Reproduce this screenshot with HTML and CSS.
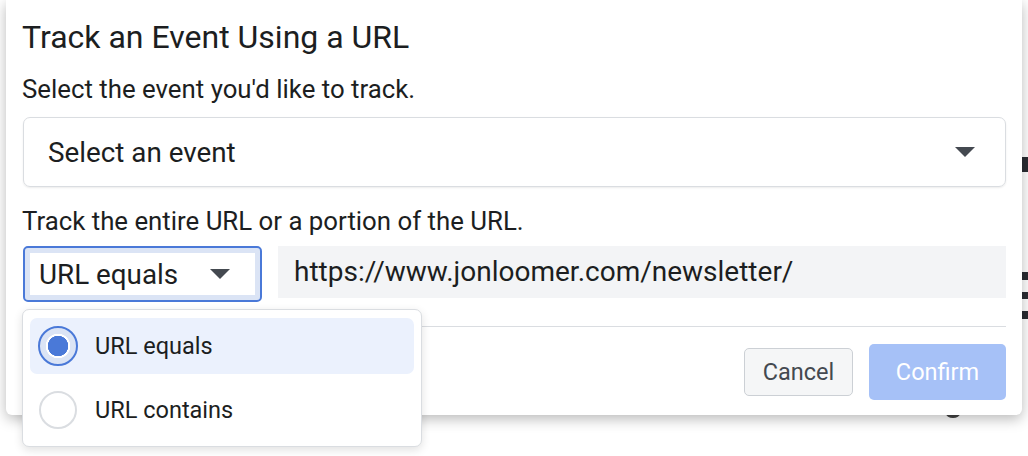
FILE: index.html
```html
<!DOCTYPE html>
<html lang="en">
<head>
    <meta charset="UTF-8">
    <meta name="viewport" content="width=device-width, initial-scale=1.0">
    <link rel="stylesheet" href="styles.css">
    <title>Track an Event Using a URL</title>
</head>
<body>

    <!-- page underneath the dialog, only its right edge shows -->
    <div class="page-behind">
        <span class="behind-bar bar-top"></span>
        <span class="behind-bar bar-1"></span>
        <span class="behind-bar bar-2"></span>
        <span class="behind-bar bar-3"></span>
        <span class="behind-arc"></span>
    </div>

    <div class="dialog">
        <h2 class="dialog-title">Track an Event Using a URL</h2>

        <p class="field-label">Select the event you'd like to track.</p>
        <div class="event-select">
            <span>Select an event</span>
            <span class="caret"></span>
        </div>

        <p class="field-label">Track the entire URL or a portion of the URL.</p>
        <div class="url-row">
            <div class="rule-select">
                <span>URL equals</span>
                <span class="caret"></span>
            </div>
            <div class="url-input">https://www.jonloomer.com/newsletter/</div>
        </div>

        <div class="dialog-footer">
            <button class="btn btn-cancel">Cancel</button>
            <button class="btn btn-confirm">Confirm</button>
        </div>

        <div class="rule-menu">
            <div class="rule-option selected">
                <span class="radio"></span>
                <span>URL equals</span>
            </div>
            <div class="rule-option">
                <span class="radio"></span>
                <span>URL contains</span>
            </div>
        </div>
    </div>

</body>
</html>
```

FILE: styles.css
```css
body {
    margin: 0;
    font-family: 'Roboto', 'Liberation Sans', sans-serif;
    background-color: #fff;
    color: #1c1e21;
    width: 1028px;
    height: 456px;
    overflow: hidden;
    position: relative;
}

.page-behind {
    position: absolute;
    top: 0;
    left: 0;
    width: 100%;
    height: 100%;
}

.behind-bar {
    position: absolute;
    left: 1020px;
    width: 10px;
    background-color: #2a2d33;
}

.bar-top { top: 157px; height: 15px; }
.bar-1 { top: 272px; height: 8px; }
.bar-2 { top: 292px; height: 7px; }
.bar-3 { top: 311px; height: 8px; }

.behind-arc {
    position: absolute;
    left: 946px;
    top: 409px;
    width: 14px;
    height: 9px;
    border-radius: 50%;
    background-color: #444;
}

.dialog {
    position: relative;
    margin: 0 6px;
    height: 415px;
    box-sizing: border-box;
    padding: 19px 16px 0;
    background-color: #fff;
    border-radius: 0 0 6px 6px;
    box-shadow: 0 4px 14px rgba(0, 0, 0, 0.28);
}

.dialog-title {
    margin: 0;
    font-size: 32px;
    font-weight: 400;
    line-height: 36px;
}

.field-label {
    margin: 0;
    font-size: 25.8px;
    line-height: 28px;
}

.dialog-title + .field-label {
    margin-top: 20px;
}

.event-select {
    display: flex;
    align-items: center;
    justify-content: space-between;
    margin: 14px 0 20px 1px;
    height: 70px;
    box-sizing: border-box;
    padding: 0 30px 0 24px;
    border: 1.5px solid #dadde1;
    border-radius: 7px;
    box-shadow: 0 1px 2px rgba(0, 0, 0, 0.08);
    font-size: 27.8px;
}

.caret {
    width: 0;
    height: 0;
    border-left: 10px solid transparent;
    border-right: 10px solid transparent;
    border-top: 10px solid #444950;
}

.url-row {
    display: flex;
    gap: 16px;
    margin-top: 11px;
    align-items: flex-start;
}

.rule-select {
    display: flex;
    align-items: center;
    justify-content: space-between;
    margin-left: 1px;
    width: 239px;
    height: 56px;
    box-sizing: border-box;
    padding: 0 30px 0 14px;
    border: 2px solid #4a79d8;
    border-radius: 5px;
    box-shadow: inset 0 0 0 5px #dbe4f5;
    font-size: 27.8px;
}

.url-input {
    flex: 1;
    height: 52px;
    line-height: 52px;
    padding-left: 16px;
    background-color: #f3f4f6;
    font-size: 28px;
}

.dialog-footer {
    display: flex;
    justify-content: flex-end;
    align-items: center;
    gap: 16px;
    margin-top: 24px;
    padding-top: 17px;
    border-top: 1.5px solid #dadde1;
}

.btn {
    font-family: 'Roboto', 'Liberation Sans', sans-serif;
    font-size: 23.5px;
    border-radius: 5px;
    padding: 0;
    cursor: pointer;
}

.btn-cancel {
    width: 109px;
    height: 48px;
    background-color: #f5f6f7;
    border: 1.5px solid #ccd0d5;
    color: #444950;
}

.btn-confirm {
    width: 137px;
    height: 56px;
    background-color: #a6c1f7;
    border: none;
    color: #fff;
}

.rule-menu {
    position: absolute;
    left: 16px;
    top: 309px;
    width: 400px;
    box-sizing: border-box;
    display: flex;
    flex-direction: column;
    gap: 8px;
    padding: 8px 7px;
    background-color: #fff;
    border: 1.5px solid #dadde1;
    border-radius: 7px;
    box-shadow: 0 3px 10px rgba(0, 0, 0, 0.12);
}

.rule-option {
    display: flex;
    align-items: center;
    gap: 17px;
    height: 56px;
    padding-left: 8px;
    border-radius: 7px;
    font-size: 23.5px;
}

.rule-option.selected {
    background-color: #ebf1fd;
}

.radio {
    width: 34px;
    height: 34px;
    margin: 0 1px;
    border-radius: 50%;
    border: 2px solid #dadde1;
    background-color: #fff;
    flex-shrink: 0;
}

.rule-option.selected .radio {
    width: 36px;
    height: 36px;
    margin: 0;
    border-color: #4a79d8;
    background: radial-gradient(circle, #4a79d8 0 10px, #fff 10.5px 12px, #dbe4f5 12.5px);
}
```
